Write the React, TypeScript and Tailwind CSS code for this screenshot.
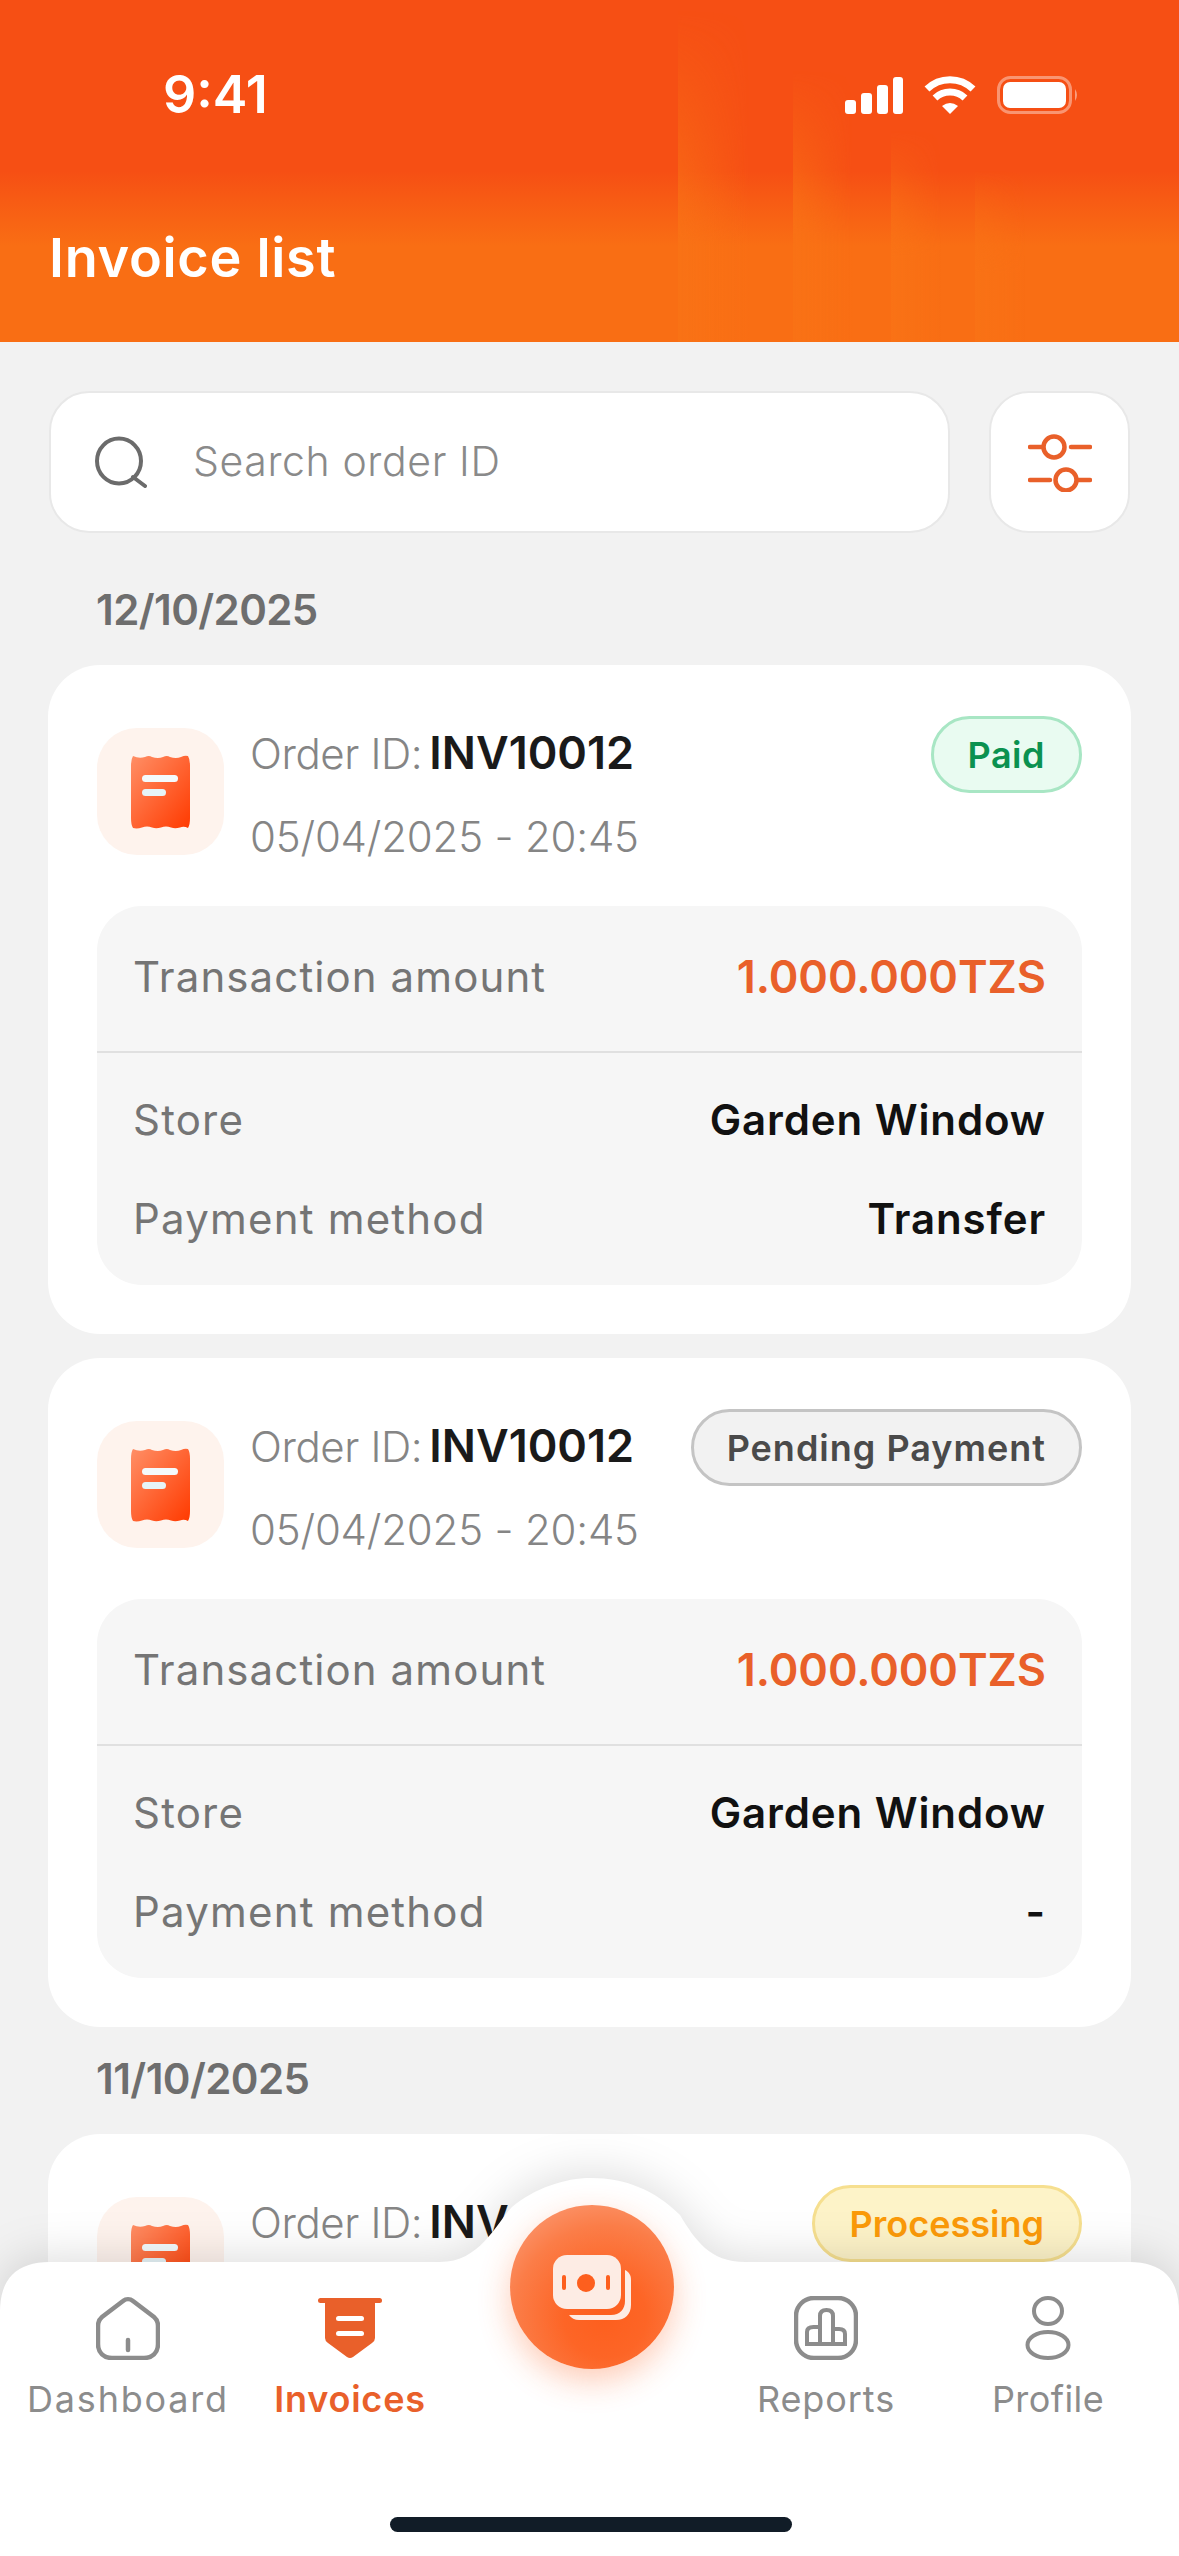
const GRAY_ICON = '#8c8c8c';

type Status = 'paid' | 'pending' | 'processing';

const BADGE: Record<Status, { label: string; cls: string }> = {
  paid: { label: 'Paid', cls: 'bg-[#e9fbf1] border-[#a8e6c4] text-[#0b9150] px-[34px] tracking-[0.5px]' },
  pending: { label: 'Pending Payment', cls: 'bg-[#f2f2f2] border-[#c4c4c4] text-[#4a4a4a] px-[33px] tracking-[1px]' },
  processing: { label: 'Processing', cls: 'bg-[#fdf3c8] border-[#f6df8f] text-[#fb9a09] px-[35px]' },
};

function ReceiptIcon({ id }: { id: string }) {
  return (
    <svg width="59" height="76" viewBox="0 0 59 76">
      <defs>
        <linearGradient id={id} x1="0" y1="0" x2="1" y2="1">
          <stop offset="0" stopColor="#ff8f66" />
          <stop offset="1" stopColor="#ff3a00" />
        </linearGradient>
      </defs>
      <path
        d="M2 2 Q8 5 14 3 Q18 1 21 3 Q27 5 32 3 Q36 1 39 3 Q45 5 50 3 Q54 1 57 2 Q59 5 59 12 V64 Q59 71 57 74 Q53 72 49 73.5 Q44 75 40 73.5 Q35 71.5 30 73.5 Q25 75 21 73.5 Q16 71.5 11 73.5 Q6 75 2 74 Q0 71 0 64 V12 Q0 5 2 2 Z"
        fill={`url(#${id})`}
      />
      <rect x="11" y="21" width="36" height="7" rx="3.5" fill="#f4fafc" />
      <rect x="11" y="35" width="24" height="7" rx="3.5" fill="#e6f4f8" />
    </svg>
  );
}

function Row({ label, value }: { label: string; value: string }) {
  return (
    <div className="flex h-[99px] items-center justify-between">
      <span className="text-[42px] tracking-[1.2px] text-[#757575]">{label}</span>
      <span className="text-[42px] font-semibold tracking-[0.9px] text-[#111111]">{value}</span>
    </div>
  );
}

function InvoiceCard({ id, status, method }: { id: string; status: Status; method?: string }) {
  const badge = BADGE[status];
  return (
    <div className="rounded-[52px] bg-white px-[49px] pb-[49px] pt-[51px]">
      <div className="flex h-[190px] items-start">
        <div className="mt-[12px] flex h-[127px] w-[127px] shrink-0 items-center justify-center rounded-[40px] bg-[#fef3ed]">
          <ReceiptIcon id={id} />
        </div>
        <div className="ml-[26px] flex flex-col gap-[9px]">
          <div className="flex h-[74px] items-center gap-[7px]">
            <span className="text-[42px] font-light tracking-[-0.4px] text-[#858585]">Order ID:</span>
            <span className="text-[45px] font-semibold text-[#1a1a1a]">INV10012</span>
          </div>
          <div className="flex h-[74px] items-center text-[42px] font-light tracking-[-0.2px] text-[#858585]">05/04/2025 - 20:45</div>
        </div>
        <div className={`ml-auto flex h-[77px] items-center rounded-full border-[3px] text-[36px] font-semibold ${badge.cls}`}>
          {badge.label}
        </div>
      </div>
      {method && (
        <div className="rounded-[45px] bg-[#f6f6f6] px-[36px]">
          <div className="-mx-[36px] flex h-[147px] items-center justify-between border-b-2 border-[#e0e0e0] px-[36px] pb-[4px]">
            <span className="text-[42px] tracking-[1.1px] text-[#757575]">Transaction amount</span>
            <span className="text-[45px] font-semibold tracking-[-0.1px] text-[#e9602a]">1.000.000TZS</span>
          </div>
          <div className="pb-[17px] pt-[17px]">
            <Row label="Store" value="Garden Window" />
            <Row label="Payment method" value={method} />
          </div>
        </div>
      )}
    </div>
  );
}

function NavItem({ label, active, cls, children }: { label: string; active?: boolean; cls: string; children: React.ReactNode }) {
  return (
    <div className="flex w-[222px] flex-col items-center">
      <div className="flex h-[64px] items-center justify-center">{children}</div>
      <span className={`mt-[12px] text-[36px] leading-[54px] ${cls} ${active ? 'font-semibold text-[#e9602a]' : 'text-[#8c8c8c]'}`}>{label}</span>
    </div>
  );
}

export default function App() {
  return (
    <div className="relative h-[2556px] w-[1179px] overflow-hidden bg-[#f2f2f2] font-['Inter',sans-serif]">
      {/* header */}
      <div className="relative h-[342px] overflow-hidden bg-[linear-gradient(to_bottom,#f64f14_0%,#f64f14_50%,#f96e14_72%,#f96e14_100%)]">
        <div className="absolute bottom-0 left-[678px] top-[10px] w-[72px] bg-gradient-to-r from-[#f97316] to-transparent opacity-80 [mask-image:linear-gradient(to_bottom,transparent,black_70%)]" />
        <div className="absolute bottom-0 left-[793px] top-[70px] w-[60px] bg-gradient-to-r from-[#f97316] to-transparent opacity-80 [mask-image:linear-gradient(to_bottom,transparent,black_60%)]" />
        <div className="absolute bottom-0 left-[891px] top-[130px] w-[50px] bg-gradient-to-r from-[#f97316] to-transparent opacity-80 [mask-image:linear-gradient(to_bottom,transparent,black_60%)]" />
        <div className="absolute bottom-0 left-[975px] top-[170px] w-[50px] bg-gradient-to-r from-[#f97316] to-transparent opacity-80 [mask-image:linear-gradient(to_bottom,transparent,black_60%)]" />
        <div className="relative flex h-[70px] translate-y-[60px] items-center justify-between pl-[163px] pr-[100px]">
          <span className="text-[52px] font-semibold text-white">9:41</span>
          <div className="flex items-center gap-[21px]">
            <svg width="58" height="38" viewBox="0 0 58 38" fill="#fff">
              <rect x="0" y="24" width="11" height="14" rx="3" />
              <rect x="16" y="17" width="11" height="21" rx="3" />
              <rect x="32" y="9" width="11" height="29" rx="3" />
              <rect x="48" y="1" width="10" height="37" rx="3" />
            </svg>
            <svg width="52" height="38" viewBox="0 0 52 38" fill="none" stroke="#fff" strokeWidth="7">
              <path d="M3 13 A 33 33 0 0 1 49 13" />
              <path d="M11 22 A 22 22 0 0 1 41 22" />
              <path d="M18 30 Q26 24 34 30 L26 38 Z" fill="#fff" stroke="none" />
            </svg>
            <svg width="82" height="38" viewBox="0 0 82 38" fill="none">
              <rect x="1.5" y="1.5" width="72" height="35" rx="12" stroke="#fff" strokeOpacity="0.4" strokeWidth="3" />
              <rect x="6" y="6" width="63" height="26" rx="7" fill="#fff" />
              <path d="M78 13 Q82 19 78 25 Z" fill="#fff" fillOpacity="0.45" />
            </svg>
          </div>
        </div>
        <h1 className="relative ml-[49px] mt-[153px] flex h-[70px] items-center text-[54px] font-semibold leading-none tracking-[0.7px] text-white">Invoice list</h1>
      </div>

      {/* content */}
      <div className="px-[48px] pt-[49px]">
        <div className="ml-[1px] mr-[1px] flex h-[142px] gap-[39px]">
          <div className="flex flex-1 items-center rounded-[40px] border-2 border-[#e8e8e8] bg-white pl-[44px]">
            <svg width="52" height="52" viewBox="0 0 52 52" fill="none" stroke="#6b6b6b" strokeWidth="4" strokeLinecap="round">
              <ellipse cx="24" cy="25" rx="22" ry="22.5" />
              <path d="M38 41 L50 50" />
            </svg>
            <span className="ml-[46px] text-[41px] font-light tracking-[0.6px] text-[#8a8a8a]">Search order ID</span>
          </div>
          <div className="flex w-[141px] items-center justify-center rounded-[40px] border-2 border-[#e8e8e8] bg-white">
            <svg width="64" height="60" viewBox="0 0 64 60" fill="none" stroke="#e9602a" strokeWidth="4.5" strokeLinecap="round">
              <circle cx="26" cy="15" r="10.5" />
              <path d="M2 15 H15 M43 15 H62" />
              <circle cx="38" cy="48" r="10.5" />
              <path d="M2 48 H22 M50 48 H62" />
            </svg>
          </div>
        </div>

        <div className="flex h-[132px] items-center pl-[48px] pt-[21px] text-[42px] font-semibold tracking-[-0.6px] text-[#6e6e6e]">12/10/2025</div>

        <div className="flex flex-col gap-[24px]">
          <InvoiceCard id="r1" status="paid" method="Transfer" />
          <InvoiceCard id="r2" status="pending" method="-" />
        </div>

        <div className="flex h-[107px] items-center pb-[5px] pl-[48px] text-[42px] font-semibold tracking-[-0.6px] text-[#6e6e6e]">11/10/2025</div>

        <InvoiceCard id="r3" status="processing" />
      </div>

      {/* bottom nav */}
      <div className="absolute bottom-0 left-0 h-[378px] w-[1179px]">
        <svg className="absolute inset-0 drop-shadow-[0_-6px_22px_rgba(0,0,0,0.13)]" width="1179" height="378" viewBox="0 0 1179 378">
          <path
            d="M0 134 Q0 84 50 84 H440 C480 84 495 47 512 29 C535 10 565 0 591 0 C625 0 655 12 680 37 C695 62 710 84 745 84 H1129 Q1179 84 1179 134 V378 H0 Z"
            fill="#fff"
          />
        </svg>
        <div className="relative flex pl-[17px] pt-[118px]">
          <NavItem label="Dashboard" cls="tracking-[1.8px]">
            <svg width="64" height="64" viewBox="0 0 64 64" fill="none" stroke={GRAY_ICON} strokeWidth="4.5" strokeLinecap="round">
              <path d="M27 5 C30 2.5 34 2.5 37 5 L58 21 C61 23.5 62 26 62 30 V48 C62 57 56 62 48 62 H16 C8 62 2 57 2 48 V30 C2 26 3 23.5 6 21 Z" />
              <path d="M32 44 V54" />
            </svg>
          </NavItem>
          <NavItem label="Invoices" active cls="tracking-[0.8px]">
            <svg width="64" height="60" viewBox="0 0 64 60">
              <rect x="0" y="0" width="64" height="5" rx="2.5" fill="#e9602a" />
              <path d="M7 4 H57 V40 Q57 43 54 45 L35 59 Q32 61 29 59 L10 45 Q7 43 7 40 Z" fill="#e9602a" />
              <rect x="18" y="18" width="28" height="5" rx="2.5" fill="#fff" />
              <rect x="18" y="33" width="28" height="5" rx="2.5" fill="#fff" />
            </svg>
          </NavItem>
          <div className="w-[254px]" />
          <NavItem label="Reports" cls="tracking-[0.9px]">
            <svg width="64" height="64" viewBox="0 0 64 64" fill="none" stroke={GRAY_ICON} strokeWidth="4.5">
              <rect x="2" y="2" width="60" height="60" rx="18" />
              <path d="M13 48 V36 Q13 31 19.5 31 H26 V20 Q26 14 32.5 14 Q39 14 39 20 V33 H45 Q51 33 51 38 V48 Z M26 31 V48 M39 33 V48" strokeWidth="4" />
            </svg>
          </NavItem>
          <NavItem label="Profile" cls="tracking-[0.4px]">
            <svg width="46" height="64" viewBox="0 0 46 64" fill="none" stroke={GRAY_ICON} strokeWidth="4">
              <ellipse cx="23" cy="15" rx="14" ry="13" />
              <ellipse cx="23" cy="49" rx="20.5" ry="13" />
            </svg>
          </NavItem>
        </div>
        <div className="absolute bottom-[24px] left-[390px] h-[15px] w-[402px] rounded-full bg-[#111c27]" />
      </div>

      {/* scan button */}
      <div className="absolute left-[510px] top-[2205px] flex h-[164px] w-[164px] items-center justify-center rounded-full bg-[radial-gradient(circle_at_58%_68%,#fd5f1e_0%,#fd6526_28%,#fb7d48_62%,#fba584_100%)] shadow-[0_12px_32px_rgba(253,95,30,0.32)]">
        <svg width="78" height="65" viewBox="0 0 78 65">
          <rect x="0" y="0" width="68" height="54" rx="14" fill="#fdece4" />
          <path d="M72 15 C76 17 78 20 78 25 V50 C78 59 72 65 63 65 H26 C22 65 18 63 16 60 H58 C67 60 72 54 72 46 Z" fill="#fdece4" />
          <circle cx="33" cy="28" r="9" fill="#fd5f1e" />
          <rect x="9" y="20" width="4" height="15" rx="2" fill="#fd5f1e" />
          <rect x="53" y="20" width="4" height="15" rx="2" fill="#fd5f1e" />
        </svg>
      </div>
    </div>
  );
}
